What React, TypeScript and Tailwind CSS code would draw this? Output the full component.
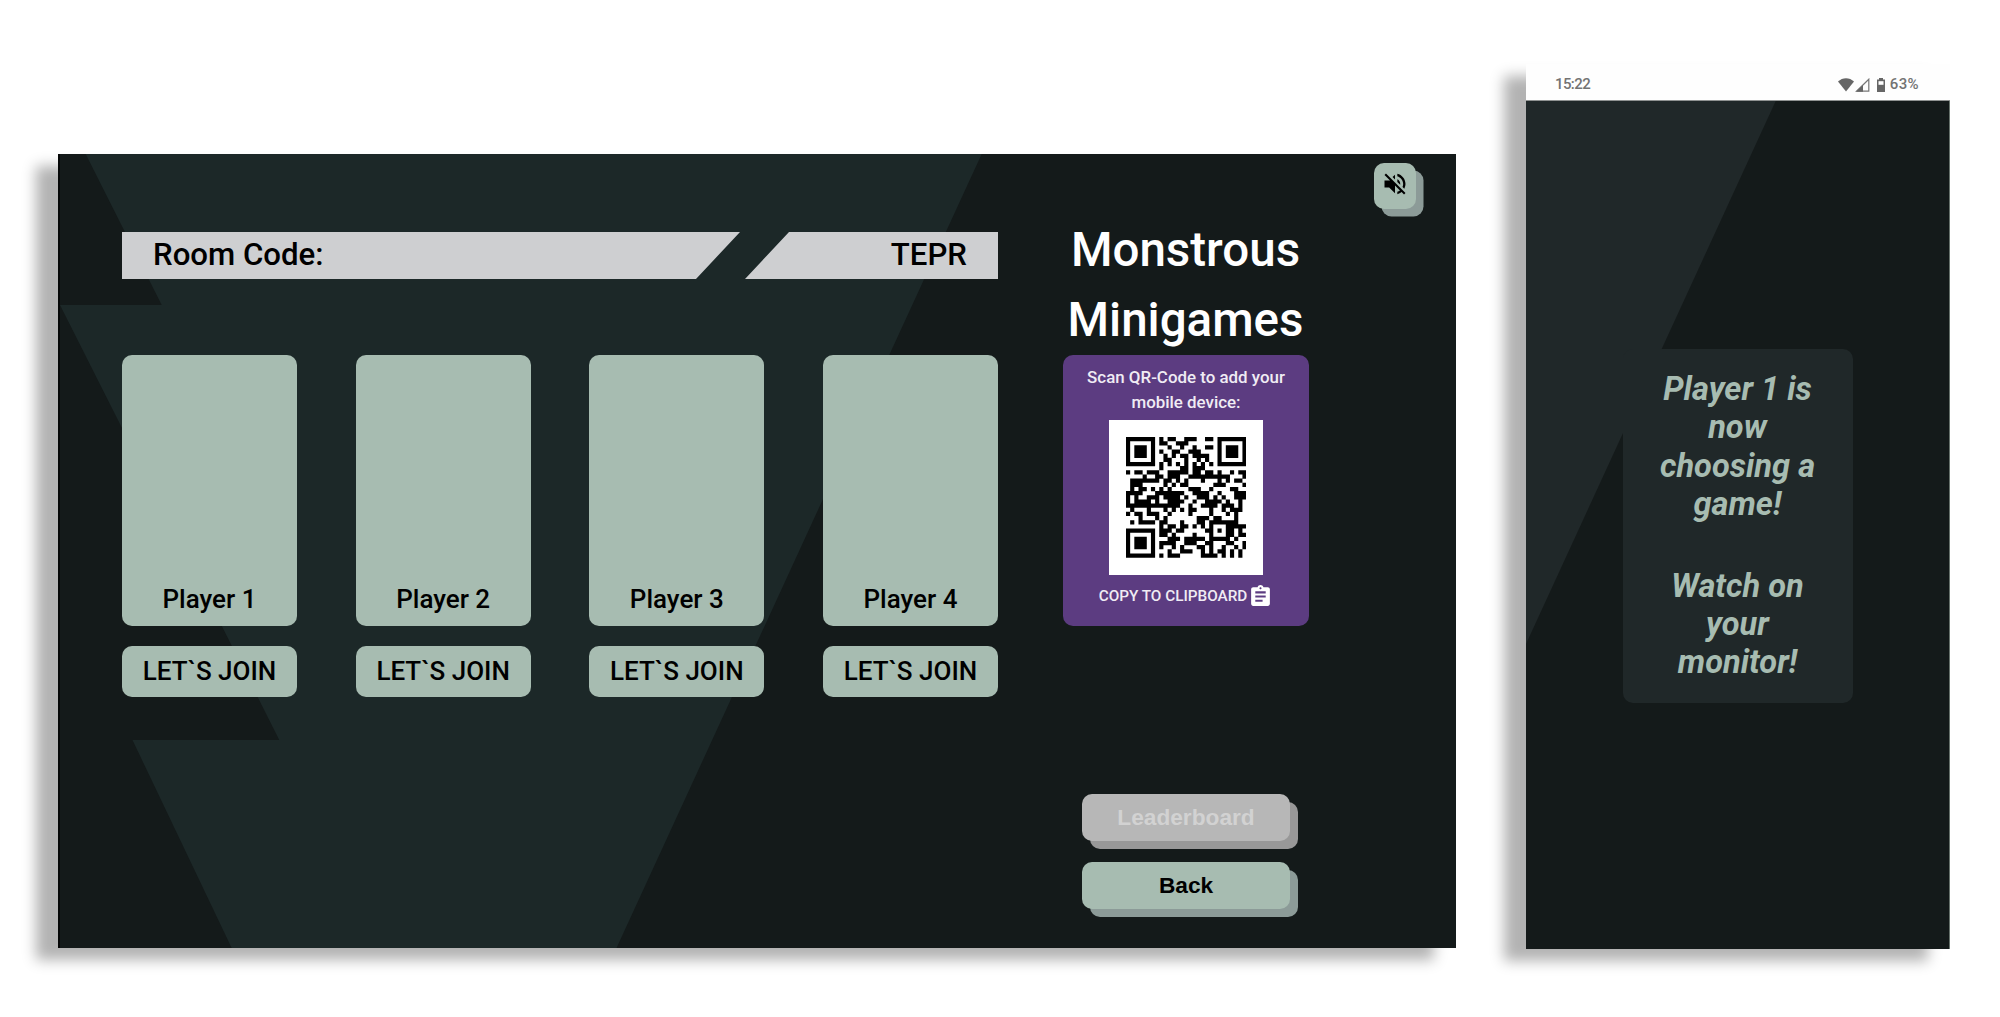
import React from 'react';
import { MdAssignment, MdVolumeOff } from 'react-icons/md';

const JOIN_URL = 'https://staging-monsters.web.app/TEPR';
const PLAYERS = ['Player 1', 'Player 2', 'Player 3', 'Player 4'];

/** Version 3 (29x29), error correction M, mask 3, byte mode. */
function encodeQr(text: string): boolean[][] {
  const size = 29;
  const dataLen = 44;
  const eccLen = 26;
  const bits: number[] = [];
  const push = (value: number, length: number) => {
    for (let i = length - 1; i >= 0; i--) bits.push((value >> i) & 1);
  };
  push(4, 4);
  push(text.length, 8);
  for (const ch of text) push(ch.charCodeAt(0), 8);
  push(0, 4);
  while (bits.length % 8) bits.push(0);
  for (let pad = 0xec; bits.length < dataLen * 8; pad ^= 0xec ^ 0x11) push(pad, 8);
  const data: number[] = [];
  for (let i = 0; i < dataLen; i++) {
    data.push(bits.slice(i * 8, i * 8 + 8).reduce((a, b) => a * 2 + b, 0));
  }

  const mul = (x: number, y: number) => {
    let z = 0;
    for (let i = 7; i >= 0; i--) {
      z = (z << 1) ^ ((z >>> 7) * 0x11d);
      z ^= ((y >>> i) & 1) * x;
    }
    return z;
  };
  const divisor: number[] = new Array(eccLen).fill(0);
  divisor[eccLen - 1] = 1;
  let root = 1;
  for (let i = 0; i < eccLen; i++) {
    for (let j = 0; j < eccLen; j++) {
      divisor[j] = mul(divisor[j], root);
      if (j + 1 < eccLen) divisor[j] ^= divisor[j + 1];
    }
    root = mul(root, 2);
  }
  const ecc: number[] = new Array(eccLen).fill(0);
  for (const b of data) {
    const factor = b ^ (ecc.shift() as number);
    ecc.push(0);
    divisor.forEach((c, i) => {
      ecc[i] ^= mul(c, factor);
    });
  }
  const all = [...data, ...ecc];

  const grid: boolean[][] = Array.from({ length: size }, () => new Array(size).fill(false));
  const fixed: boolean[][] = Array.from({ length: size }, () => new Array(size).fill(false));
  const set = (r: number, c: number, on: boolean) => {
    if (r < 0 || c < 0 || r >= size || c >= size) return;
    grid[r][c] = on;
    fixed[r][c] = true;
  };
  for (let i = 0; i < size; i++) {
    set(6, i, i % 2 === 0);
    set(i, 6, i % 2 === 0);
  }
  for (const [cr, cc] of [[3, 3], [3, size - 4], [size - 4, 3]]) {
    for (let dr = -4; dr <= 4; dr++) {
      for (let dc = -4; dc <= 4; dc++) {
        const d = Math.max(Math.abs(dr), Math.abs(dc));
        set(cr + dr, cc + dc, d !== 2 && d !== 4);
      }
    }
  }
  for (let dr = -2; dr <= 2; dr++) {
    for (let dc = -2; dc <= 2; dc++) {
      set(22 + dr, 22 + dc, Math.max(Math.abs(dr), Math.abs(dc)) !== 1);
    }
  }
  const format = 0b101101101001011;
  const bit = (i: number) => ((format >> i) & 1) === 1;
  for (let i = 0; i <= 5; i++) set(i, 8, bit(i));
  set(7, 8, bit(6));
  set(8, 8, bit(7));
  set(8, 7, bit(8));
  for (let i = 9; i < 15; i++) set(8, 14 - i, bit(i));
  for (let i = 0; i < 8; i++) set(8, size - 1 - i, bit(i));
  for (let i = 8; i < 15; i++) set(size - 15 + i, 8, bit(i));
  set(size - 8, 8, true);

  let k = 0;
  for (let right = size - 1; right >= 1; right -= 2) {
    if (right === 6) right = 5;
    for (let v = 0; v < size; v++) {
      for (let j = 0; j < 2; j++) {
        const c = right - j;
        const upward = ((right + 1) & 2) === 0;
        const r = upward ? size - 1 - v : v;
        if (fixed[r][c]) continue;
        const on = k < all.length * 8 && ((all[k >> 3] >> (7 - (k & 7))) & 1) === 1;
        k++;
        grid[r][c] = on !== ((r + c) % 3 === 0);
      }
    }
  }
  return grid;
}

function QrCode() {
  const path = encodeQr(JOIN_URL)
    .flatMap((row, r) => {
      const runs: string[] = [];
      for (let c = 0; c < row.length; c++) {
        if (!row[c]) continue;
        const start = c;
        while (row[c + 1]) c++;
        runs.push(`M${start} ${r}h${c - start + 1}v1.02H${start}z`);
      }
      return runs;
    })
    .join('');
  return (
    <div className="mt-[4px] flex h-[155px] w-[154px] items-center justify-center bg-white">
      <svg viewBox="0 0 29 29" className="size-[120.6px]">
        <path d={path} fill="#000" />
      </svg>
    </div>
  );
}

function RoomBar() {
  return (
    <div className="relative flex h-[47px] w-[876px] items-center justify-between px-[31px] pb-[1px] text-[31.2px] leading-[46px] font-medium text-black">
      <svg className="absolute inset-0 h-[47px] w-[876px]" viewBox="0 0 876 47">
        <path d="M0 0H618L574 47H0zM667 0H876V47H623z" fill="#cecfd1" />
      </svg>
      <span className="relative">Room Code:</span>
      <span className="relative">TEPR</span>
    </div>
  );
}

function Player({ name }: { name: string }) {
  return (
    <div className="flex w-[175px] flex-col gap-[20px] text-[26px] font-medium text-black">
      <div className="flex h-[271px] flex-col items-center justify-end rounded-[10px] bg-[#a7bcb1] pb-[8px] leading-[38px]">
        {name}
      </div>
      <button className="h-[51px] rounded-[10px] bg-[#a7bcb1] font-medium">LET`S JOIN</button>
    </div>
  );
}

function Monitor() {
  return (
    <section className="relative mt-[154px] ml-[58px] flex h-[794px] w-[1398px] shrink-0 bg-[#141a1a] shadow-[-22px_12px_13px_rgba(0,0,0,0.3)]">
      <svg className="absolute inset-0 h-full w-full" viewBox="0 0 1398 794">
        <path
          d="M27.7 0L103.7 151H2L221.3 586H74.5L173.7 794H558.5L923.7 0z"
          fill="#1c2828"
        />
        <path d="M0 0H2V794H0z" fill="#040606" />
      </svg>
      <div className="relative ml-[64px] flex w-[876px] flex-col pt-[78px]">
        <RoomBar />
        <div className="mt-[76px] flex justify-between">
          {PLAYERS.map((name) => (
            <Player key={name} name={name} />
          ))}
        </div>
      </div>
      <div className="relative ml-[65px] flex w-[246px] flex-col items-center pt-[61px]">
        <h1 className="pr-[1px] text-center text-[47.5px] leading-[70px] font-medium text-white">
          Monstrous
          <br />
          Minigames
        </h1>
        <div className="flex h-[271px] w-[246px] flex-col items-center rounded-[10px] bg-[#5c3c81] pt-[10px] text-[#f0ecf4]">
          <p className="text-center text-[16.9px] leading-[25px] font-medium whitespace-nowrap">
            Scan QR-Code to add your
            <br />
            mobile device:
          </p>
          <div className="pt-px">
            <QrCode />
          </div>
          <button className="mt-[9px] flex items-center text-[15.3px] font-medium">
            COPY TO CLIPBOARD
            <MdAssignment className="ml-px size-[25px] text-white" />
          </button>
        </div>
        <div className="mt-[168px] flex w-[208px] flex-col gap-[21px] [font-family:'Liberation_Sans',Arial,sans-serif]">
          <button className="h-[47px] rounded-[10px] bg-[#b7b7b7] pb-px text-[22.7px] font-bold text-[#d2d2d2] shadow-[8px_8px_0_#989898]">
            Leaderboard
          </button>
          <button className="h-[47px] rounded-[10px] bg-[#a7bcb1] pb-px text-[22.7px] font-bold text-black shadow-[8px_8px_0_#8c9b98]">
            Back
          </button>
        </div>
      </div>
      <button className="relative mt-[9px] ml-[64.500px] flex h-[46px] w-[42px] items-start justify-center rounded-[10px] bg-[#a7bcb1] pt-[7px] text-black shadow-[7.500px_7.500px_0_#8c9b98]">
        <MdVolumeOff className="size-[28px]" />
      </button>
    </section>
  );
}

function StatusBar() {
  return (
    <div className="flex h-[37px] items-center border-b border-[#909392] bg-[#fefefe] pt-[5px] pr-[31px] pl-[29px] text-[15px] font-medium text-[#737373]">
      <span className="tracking-[-0.6px]">15:22</span>
      <svg className="ml-auto h-[14px] w-[48px]" viewBox="0 0 48 14">
        <path d="M0 3.6C4.5-.9 11.500-.9 16 3.600L8 13.500z" fill="#666" />
        <path d="M18.500 13.200L30.800 1.200V13.200z" fill="none" stroke="#777" strokeWidth="1.200" />
        <path d="M18 13.800L25 7V13.800z" fill="#666" />
        <path d="M41 0h4v1.500h2V14h-8V1.500h2z" fill="#666" />
        <path d="M40.500 3.200h5v3.600h-5z" fill="#fefefe" />
      </svg>
      <span className="ml-[4px] tracking-[0.4px]">63%</span>
    </div>
  );
}

function Phone() {
  return (
    <section className="mt-[64px] ml-[70px] flex h-[885px] w-[424px] shrink-0 flex-col shadow-[-22px_12px_13px_rgba(0,0,0,0.3)]">
      <StatusBar />
      <div className="relative flex flex-1 flex-col border-r border-[#66716b] bg-[#141a1a]">
        <svg className="absolute inset-0 h-[848px] w-[423px]" viewBox="0 0 423 848">
          <path d="M0 0H249.700L0 543z" fill="#202829" />
        </svg>
        <div className="relative mt-[247.500px] ml-[96.500px] flex h-[354.500px] w-[230px] flex-col gap-[43.500px] rounded-[10px] bg-[#202829] px-[30px] pt-[21.500px] text-center text-[32.600px] leading-[38.300px] font-bold text-[#a7bcb1] italic">
          <p>
            Player 1 is
            <br />
            now
            <br />
            choosing a
            <br />
            game!
          </p>
          <p>
            Watch on
            <br />
            your
            <br />
            monitor!
          </p>
        </div>
      </div>
    </section>
  );
}

export default function App() {
  return (
    <main className="flex h-[1017px] w-[2000px] items-start overflow-hidden bg-white [font-family:Roboto,sans-serif]">
      <Monitor />
      <Phone />
    </main>
  );
}
